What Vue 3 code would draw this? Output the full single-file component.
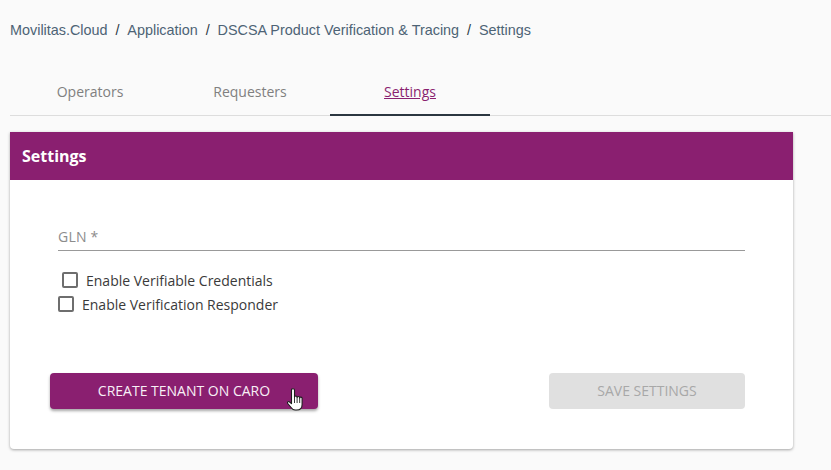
<script setup>
const crumbs = ['Movilitas.Cloud', 'Application', 'DSCSA Product Verification & Tracing', 'Settings']
const tabs = ['Operators', 'Requesters', 'Settings']
</script>

<template>
  <div class="page">
    <nav class="crumbs">
      <template v-for="(c, i) in crumbs" :key="c">
        <span v-if="i" class="sep">/</span>
        <span>{{ c }}</span>
      </template>
    </nav>
    <div class="tabs">
      <div v-for="t in tabs" :key="t" class="tab" :class="{ active: t === 'Settings' }">
        <span>{{ t }}</span>
      </div>
    </div>
    <section class="card">
      <header class="card-head">Settings</header>
      <div class="card-body">
        <div class="field">GLN *</div>
        <label class="check first"><span class="box"></span><span>Enable Verifiable Credentials</span></label>
        <label class="check second"><span class="box"></span><span>Enable Verification Responder</span></label>
        <div class="actions">
          <button class="btn primary">
            CREATE TENANT ON CARO
            <svg class="cursor" width="18" height="24" viewBox="0 0 18 24">
              <path d="M4.500 2c0-1.700 3-1.700 3 0V9c0-1.300 2.600-1.300 2.600 0v.5c0-1.300 2.600-1.300 2.600 0v.5c0-1.200 2.400-1.200 2.400.2v6.300c0 4-2 5.500-5.500 5.500H8.100c-2 0-3-1-4-2.500L.8 15.500c-.9-1.300.6-2.600 1.800-1.500l1.900 1.700z" fill="#fff" stroke="#1c1c1c" stroke-width="1.100" stroke-linejoin="round"/>
              <path d="M7.500 9v6M10.100 9.500v5.500M12.700 10v5" stroke="#1c1c1c" stroke-width=".9" fill="none"/>
            </svg>
          </button>
          <button class="btn disabled" disabled>SAVE SETTINGS</button>
        </div>
      </div>
    </section>
  </div>
</template>

<style>
html, body { margin: 0; background: #fafafa; }
</style>

<style scoped>
.page {
  width: 831px;
  height: 470px;
  overflow: hidden;
  box-sizing: border-box;
  padding: 21px 0 0 10px;
  background: #fafafa;
  font-family: "Open Sans", sans-serif;
}
.crumbs {
  display: flex;
  height: 18px;
  align-items: center;
  font-family: "Liberation Sans", Arial, sans-serif;
  font-size: 14.4px;
  color: #4d6375;
}
.sep { margin: 0 7.9px; color: #2c3a47; }
.tabs {
  display: flex;
  height: 55px;
  margin-top: 21px;
  border-bottom: 1px solid #ddd;
}
.tab {
  width: 160px;
  box-sizing: border-box;
  padding-top: 22px;
  text-align: center;
  font-size: 14px;
  line-height: 20px;
  color: #808080;
}
.tab.active {
  color: #8a1f70;
  border-bottom: 2px solid #2b3640;
  height: 56px;
}
.tab.active span { text-decoration: underline; }
.card {
  width: 783px;
  height: 317px;
  margin-top: 16px;
  background: #fff;
  border-radius: 0 0 4px 4px;
  box-shadow: 0 1px 3px rgba(0, 0, 0, .35);
  overflow: hidden;
}
.card-head {
  height: 48px;
  box-sizing: border-box;
  padding: 0 12px;
  background: #8a1f70;
  color: #fff;
  font-size: 16px;
  font-weight: 700;
  line-height: 48px;
}
.card-body {
  padding: 46px 48px 0 40px;
}
.field {
  margin-left: 8px;
  height: 24px;
  border-bottom: 1px solid #999;
  font-size: 14px;
  line-height: 22px;
  color: #8c8c8c;
  letter-spacing: .2px;
}
.check {
  display: flex;
  align-items: center;
  height: 24px;
  font-size: 14px;
  color: #3a3a3a;
}
.check.first { margin: 17px 0 0 12px; }
.check.second { margin: 0 0 0 8px; }
.box {
  width: 16px;
  height: 16px;
  box-sizing: border-box;
  border: 2px solid #6e6e6e;
  border-radius: 2px;
  margin-right: 8px;
}
.actions {
  display: flex;
  justify-content: space-between;
  margin-top: 57px;
}
.btn {
  position: relative;
  height: 36px;
  border: 0;
  border-radius: 4px;
  padding: 0 0 2px;
  font-family: "Open Sans", sans-serif;
  font-size: 14px;
  font-weight: 500;
}
.primary {
  width: 268px;
  background: #8a1f70;
  color: #f8f0f6;
  box-shadow: 0 2px 3px rgba(0, 0, 0, .35);
}
.disabled {
  width: 196px;
  background: #e0e0e0;
  color: #a8a8a8;
}
.cursor {
  position: absolute;
  left: 237px;
  top: 15px;
}
</style>
